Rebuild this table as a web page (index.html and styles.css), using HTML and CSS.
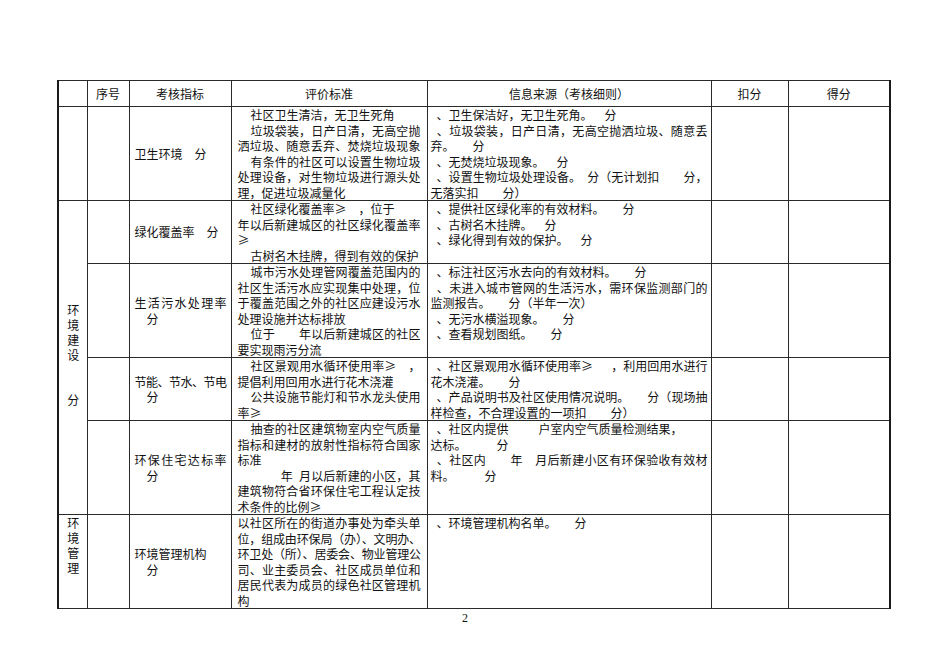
FILE: index.html
```html
<!DOCTYPE html>
<html lang="zh-CN">
<head>
<meta charset="utf-8">
<title>环境建设考核表</title>
<link rel="stylesheet" href="styles.css">
</head>
<body>
<div class="page">
<table class="sheet">
  <colgroup>
    <col class="c-grp"><col class="c-no"><col class="c-ind"><col class="c-std"><col class="c-src"><col class="c-pts"><col class="c-got">
  </colgroup>
  <thead>
    <tr>
      <th></th>
      <th>序号</th>
      <th>考核指标</th>
      <th>评价标准</th>
      <th>信息来源（考核细则）</th>
      <th>扣分</th>
      <th>得分</th>
    </tr>
  </thead>
  <tbody>
    <tr class="r6">
      <td class="grp"></td>
      <td></td>
      <td class="ind"><div class="ln">卫生环境&emsp;分</div></td>
      <td class="std">
        <div class="ln in">社区卫生清洁，无卫生死角</div>
        <div class="ln in full">垃圾袋装，日产日清，无高空抛</div>
        <div class="ln full">洒垃圾、随意丢弃、焚烧垃圾现象</div>
        <div class="ln in full">有条件的社区可以设置生物垃圾</div>
        <div class="ln full">处理设备，对生物垃圾进行源头处</div>
        <div class="ln">理，促进垃圾减量化</div>
      </td>
      <td class="src">
        <div class="ln">&ensp;、卫生保洁好，无卫生死角。&emsp;分</div>
        <div class="ln full">&ensp;、垃圾袋装，日产日清，无高空抛洒垃圾、随意丢</div>
        <div class="ln">弃。&emsp;&ensp;分</div>
        <div class="ln">&ensp;、无焚烧垃圾现象。&emsp;分</div>
        <div class="ln full">&ensp;、设置生物垃圾处理设备。&ensp;分（无计划扣&emsp;&emsp;分，</div>
        <div class="ln">无落实扣&emsp;&emsp;分）</div>
      </td>
      <td></td>
      <td></td>
    </tr>
    <tr class="r4">
      <td class="grp" rowspan="4"><span class="vert">环境建设&emsp;&emsp;分</span></td>
      <td></td>
      <td class="ind"><div class="ln">绿化覆盖率&emsp;分</div></td>
      <td class="std">
        <div class="ln in">社区绿化覆盖率≥&emsp;，位于</div>
        <div class="ln full">年以后新建城区的社区绿化覆盖率</div>
        <div class="ln">≥</div>
        <div class="ln in">古树名木挂牌，得到有效的保护</div>
      </td>
      <td class="src">
        <div class="ln">&ensp;、提供社区绿化率的有效材料。&emsp;&ensp;分</div>
        <div class="ln">&ensp;、古树名木挂牌。&emsp;分</div>
        <div class="ln">&ensp;、绿化得到有效的保护。&emsp;分</div>
      </td>
      <td></td>
      <td></td>
    </tr>
    <tr class="r6">
      <td></td>
      <td class="ind">
        <div class="ln full">生活污水处理率</div>
        <div class="ln">&emsp;分</div>
      </td>
      <td class="std">
        <div class="ln in full">城市污水处理管网覆盖范围内的</div>
        <div class="ln full">社区生活污水应实现集中处理，位</div>
        <div class="ln full">于覆盖范围之外的社区应建设污水</div>
        <div class="ln">处理设施并达标排放</div>
        <div class="ln in full">位于&emsp;&emsp;年以后新建城区的社区</div>
        <div class="ln">要实现雨污分流</div>
      </td>
      <td class="src">
        <div class="ln">&ensp;、标注社区污水去向的有效材料。&emsp;&ensp;分</div>
        <div class="ln full">&ensp;、未进入城市管网的生活污水，需环保监测部门的</div>
        <div class="ln">监测报告。&emsp;&ensp;分（半年一次）</div>
        <div class="ln">&ensp;、无污水横溢现象。&emsp;&ensp;分</div>
        <div class="ln">&ensp;、查看规划图纸。&emsp;&ensp;分</div>
      </td>
      <td></td>
      <td></td>
    </tr>
    <tr class="r4">
      <td></td>
      <td class="ind">
        <div class="ln full tight">节能、节水、节电</div>
        <div class="ln">&emsp;分</div>
      </td>
      <td class="std">
        <div class="ln in full">社区景观用水循环使用率≥&emsp;，</div>
        <div class="ln">提倡利用回用水进行花木浇灌</div>
        <div class="ln in full">公共设施节能灯和节水龙头使用</div>
        <div class="ln">率≥</div>
      </td>
      <td class="src">
        <div class="ln full">&ensp;、社区景观用水循环使用率≥&emsp;&ensp;，利用回用水进行</div>
        <div class="ln">花木浇灌。&emsp;&ensp;分</div>
        <div class="ln full">&ensp;、产品说明书及社区使用情况说明。&emsp;&ensp;分（现场抽</div>
        <div class="ln">样检查，不合理设置的一项扣&emsp;&emsp;分）</div>
      </td>
      <td></td>
      <td></td>
    </tr>
    <tr class="r6">
      <td></td>
      <td class="ind">
        <div class="ln full">环保住宅达标率</div>
        <div class="ln">&emsp;分</div>
      </td>
      <td class="std">
        <div class="ln in full">抽查的社区建筑物室内空气质量</div>
        <div class="ln full">指标和建材的放射性指标符合国家</div>
        <div class="ln">标准</div>
        <div class="ln in full">&emsp;&emsp;&ensp;年&ensp;月以后新建的小区，其</div>
        <div class="ln full">建筑物符合省环保住宅工程认定技</div>
        <div class="ln">术条件的比例≥</div>
      </td>
      <td class="src">
        <div class="ln">&ensp;、社区内提供&emsp;&emsp;&ensp;户室内空气质量检测结果，</div>
        <div class="ln">达标。&emsp;&emsp;&ensp;分</div>
        <div class="ln full">&ensp;、社区内&emsp;&emsp;年&emsp;月后新建小区有环保验收有效材</div>
        <div class="ln">料。&emsp;&emsp;&ensp;分</div>
      </td>
      <td></td>
      <td></td>
    </tr>
    <tr class="r6">
      <td class="grp top"><span class="vert">环境管理</span></td>
      <td></td>
      <td class="ind">
        <div class="ln">环境管理机构</div>
        <div class="ln">&emsp;分</div>
      </td>
      <td class="std">
        <div class="ln full">以社区所在的街道办事处为牵头单</div>
        <div class="ln full tight">位，组成由环保局（办）、文明办、</div>
        <div class="ln full tight">环卫处（所）、居委会、物业管理公</div>
        <div class="ln full">司、业主委员会、社区成员单位和</div>
        <div class="ln full">居民代表为成员的绿色社区管理机</div>
        <div class="ln">构</div>
      </td>
      <td class="src">
        <div class="ln">&ensp;、环境管理机构名单。&emsp;&ensp;分</div>
      </td>
      <td></td>
      <td></td>
    </tr>
  </tbody>
</table>
<div class="pno">2</div>
</div>
</body>
</html>
```

FILE: styles.css
```css
* { box-sizing: border-box; }
html, body { margin: 0; padding: 0; background: #fff; }
body {
  font-family: "Noto Sans CJK SC", "Liberation Serif", serif;
  font-size: 12px;
  color: #111;
}
.page { padding: 80px 0 0 57px; }

.sheet {
  border-collapse: collapse;
  table-layout: fixed;
  width: 833px;
  border-left: 2px solid #1a1a1a;
  border-right: 2px solid #1a1a1a;
}
.c-grp { width: 29px; }
.c-no { width: 42px; }
.c-ind { width: 102px; }
.c-std { width: 196px; }
.c-src { width: 284px; }
.c-pts { width: 77px; }
.c-got { width: 102px; }

.sheet th,
.sheet td {
  border: 1px solid #2a2a2a;
  padding: 0;
  line-height: 15.5px;
  font-weight: normal;
  vertical-align: top;
  text-align: left;
}
.sheet th {
  height: 26px;
  text-align: center;
  vertical-align: middle;
}

.sheet td.ind { padding: 0 4px 0 5px; vertical-align: middle; }
.sheet td.std { padding: 0 6px; }
.sheet td.src { padding: 0 3px; }
.sheet td.grp {
  text-align: center;
  vertical-align: middle;
  line-height: 15px;
}
.sheet td.grp.top { vertical-align: top; padding-top: 2px; }
.vert {
  display: inline-block;
  writing-mode: vertical-rl;
  letter-spacing: 3px;
  line-height: 14px;
  white-space: nowrap;
}

.ln { white-space: nowrap; }
.ln.in { text-indent: 13px; }
.ln.full { text-align: justify; text-align-last: justify; }
.ln.tight { letter-spacing: -0.6px; }

.pno {
  width: 816px;
  margin-top: 2px;
  text-align: center;
  font-family: "Liberation Serif", serif;
  font-size: 12px;
  line-height: 14px;
}
```
